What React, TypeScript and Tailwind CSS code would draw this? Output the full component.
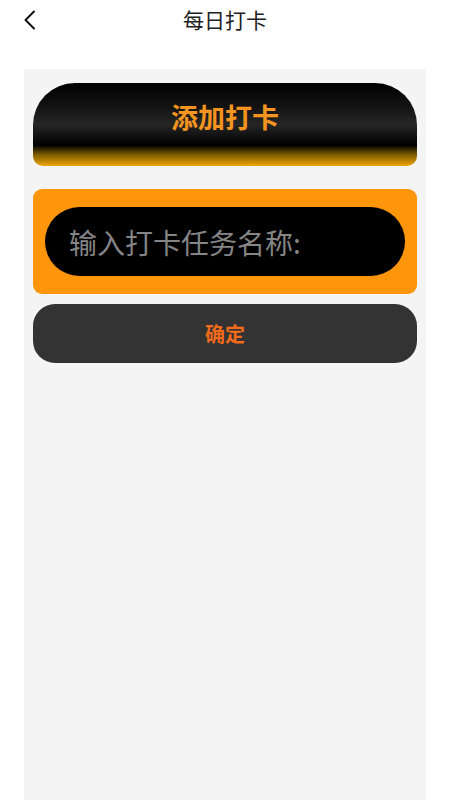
import React from 'react';

const App: React.FC = () => {
    return (
        <div className="min-h-screen bg-white flex flex-col" style={{ fontFamily: '"Noto Sans CJK SC", "Noto Sans", sans-serif' }}>
            <div className="h-[40px] flex items-center relative">
                <svg className="absolute left-[22px] top-[10px]" width="16" height="20" viewBox="0 0 16 20" fill="none">
                    <path d="M12 1.5 L3.5 10 L12 18.5" stroke="#111" strokeWidth="2" strokeLinecap="round" strokeLinejoin="round" />
                </svg>
                <h1 className="w-full text-center text-[21px] text-[#222]">每日打卡</h1>
            </div>
            <div className="mx-[24px] mt-[29px] flex-1 bg-[#f4f4f4] px-[9px] pt-[14px] min-h-[731px]">
                <div className="h-[83px] rounded-t-[42px] rounded-b-[10px] bg-[linear-gradient(to_bottom,#000_0%,#141414_30%,#262626_50%,#0a0a0a_68%,#000_75%,#7a5a00_86%,#f0a600_100%)] flex items-center justify-center pb-[14px]">
                    <span className="text-[27px] font-bold text-[#f5951f]">添加打卡</span>
                </div>
                <div className="mt-[23px] h-[105px] rounded-[9px] bg-[#ff950a] px-[12px] flex items-center">
                    <input
                        type="text"
                        placeholder="输入打卡任务名称:"
                        className="w-full h-[69px] rounded-full bg-black pl-[24px] text-[28px] text-[#888] placeholder:text-[#858585] outline-none"
                    />
                </div>
                <button className="mt-[10px] w-full h-[59px] rounded-[22px] bg-[#333] flex items-center justify-center">
                    <span className="text-[20px] font-bold text-[#f26a1b]">确定</span>
                </button>
            </div>
        </div>
    );
};

export default App;
